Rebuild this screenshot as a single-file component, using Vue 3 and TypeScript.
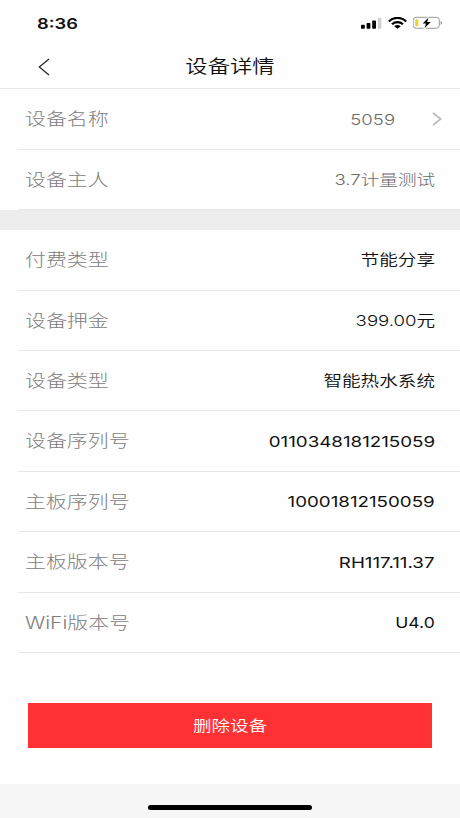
<script setup lang="ts">
interface Row {
  label: string
  value: string
  arrow?: boolean
  kind?: 'latin' | 'serial' | 'short'
}

const ownerRows: Row[] = [
  { label: '设备名称', value: '5059', arrow: true, kind: 'latin' },
  { label: '设备主人', value: '3.7计量测试' },
]

const detailRows: Row[] = [
  { label: '付费类型', value: '节能分享' },
  { label: '设备押金', value: '399.00元' },
  { label: '设备类型', value: '智能热水系统' },
  { label: '设备序列号', value: '0110348181215059', kind: 'serial' },
  { label: '主板序列号', value: '10001812150059', kind: 'serial' },
  { label: '主板版本号', value: 'RH117.11.37', kind: 'serial' },
  { label: 'WiFi版本号', value: 'U4.0', kind: 'short' },
]
</script>

<template>
  <div class="screen">
    <div class="status">
      <span class="time">8:36</span>
      <div class="indicators">
        <svg class="signal" width="21" height="12" viewBox="0 0 21 12">
          <rect x="0" y="7.8" width="3.8" height="4" rx="0.8" />
          <rect x="5.6" y="5.9" width="3.8" height="5.9" rx="0.8" />
          <rect x="11.2" y="3.5" width="3.8" height="8.3" rx="0.8" />
          <rect x="16.8" y="1.1" width="3.6" height="10.7" rx="0.8" fill="#cfcfcf" />
        </svg>
        <svg class="wifi" width="19" height="12" viewBox="0 0 19 12">
          <g fill="none" stroke="#000" stroke-width="2.2">
            <path d="M0.8 4.5C5.7-.3 13.3-.3 18.2 4.5" />
            <path d="M4 7.3C7.2 4.4 11.8 4.4 15 7.3" />
          </g>
          <path d="M6.2 9.2C8.1 7.6 10.9 7.6 12.8 9.2L9.5 11.8Z" />
        </svg>
        <svg class="battery" width="30" height="14" viewBox="0 0 30 14">
          <rect x="0.2" y="1.3" width="26.1" height="11" rx="3" fill="none" stroke="#999" stroke-width="1" />
          <path d="M27.6 4.9C29.5 5.3 29.5 8.3 27.6 8.7Z" fill="#999" />
          <rect x="2.2" y="3.3" width="3" height="7" rx="1" fill="#f4d21f" />
          <path d="M15.4 1.7L9.7 7.6H13L11.7 12L17.8 6.1H14.2Z" stroke="#fff" stroke-width="2" paint-order="stroke" />
        </svg>
      </div>
    </div>
    <header class="nav">
      <svg class="back" width="12" height="18" viewBox="0 0 12 18">
        <path d="M11 1L1.3 9L11 17" fill="none" stroke="#222" stroke-width="1.2" />
      </svg>
      <h1 class="title">设备详情</h1>
    </header>
    <section class="group">
      <div v-for="row in ownerRows" :key="row.label" class="row muted">
        <span class="label">{{ row.label }}</span>
        <span class="value" :class="row.kind">{{ row.value }}</span>
        <svg v-if="row.arrow" class="arrow" width="10" height="14" viewBox="0 0 10 14">
          <path d="M1 1L8.7 7L1 13" fill="none" stroke="#bbb" stroke-width="1.6" />
        </svg>
      </div>
    </section>
    <div class="divider"></div>
    <section class="group">
      <div v-for="row in detailRows" :key="row.label" class="row">
        <span class="label">{{ row.label }}</span>
        <span class="value" :class="row.kind">{{ row.value }}</span>
      </div>
    </section>
    <button class="remove" type="button"><span>删除设备</span></button>
    <footer class="home"><div class="bar"></div></footer>
  </div>
</template>

<style>
body {
  margin: 0;
  background: #fff;
}
</style>

<style scoped>
.screen {
  display: flex;
  flex-direction: column;
  width: 460px;
  height: 818px;
  overflow: hidden;
  background: #fefefe;
  font-family: Inter, "Noto Sans CJK SC", sans-serif;
  color: #111;
}
.status {
  display: flex;
  align-items: center;
  justify-content: space-between;
  box-sizing: border-box;
  height: 46px;
  padding: 0 17px 0 37px;
}
.time {
  font-size: 15px;
  font-weight: 600;
  transform: scaleX(1.22);
  transform-origin: left;
}
.indicators {
  display: flex;
  align-items: center;
}
.wifi {
  margin-left: 6px;
}
.battery {
  margin-left: 6px;
}
.nav {
  display: grid;
  grid-template-columns: 38px 1fr 38px;
  align-items: center;
  box-sizing: border-box;
  height: 43px;
  border-bottom: 1px solid #e8e8e8;
}
.back {
  justify-self: end;
  overflow: visible;
  transform: translateX(12px);
}
.title {
  margin: 0;
  font-size: 18px;
  font-weight: 350;
  line-height: 24px;
  text-align: center;
  transform: scaleX(1.24);
}
.group {
  flex: none;
  padding: 0.3px 0 0 18px;
}
.row {
  display: flex;
  align-items: center;
  box-sizing: border-box;
  height: 60.42px;
  padding: 0 25px 0 7px;
  border-bottom: 1px solid #e7e7e7;
}
.label {
  padding-bottom: 2.6px;
  font-size: 17px;
  font-weight: 300;
  color: #808080;
  white-space: nowrap;
  transform: scaleX(1.23);
  transform-origin: left;
}
.value {
  margin-left: auto;
  padding-bottom: 2px;
  font-size: 15px;
  font-weight: 350;
  white-space: nowrap;
  transform: scaleX(1.24);
  transform-origin: right;
}
.latin,
.serial,
.short {
  padding: 0.4px 0 0;
  font-weight: 400;
}
.serial {
  transform: scaleX(1.25);
}
.short {
  transform: scaleX(1.17);
}
.muted .value {
  font-weight: 300;
  color: #6c6c6c;
}
.arrow {
  margin: 0 -7px 0 37px;
}
.divider {
  flex: none;
  height: 19.86px;
  background: #ededed;
}
.remove {
  flex: none;
  height: 45px;
  margin: 49.6px 28px 0;
  padding: 0 0 1px;
  border: 0;
  background: #ff3134;
  color: #fff;
  font: 350 15px Inter, "Noto Sans CJK SC", sans-serif;
}
.remove span {
  display: inline-block;
  transform: scaleX(1.235);
}
.home {
  display: flex;
  justify-content: center;
  box-sizing: border-box;
  height: 34px;
  margin-top: auto;
  padding-top: 20.5px;
  background: #f6f6f6;
}
.bar {
  width: 164px;
  height: 5px;
  border-radius: 3px;
  background: #000;
}
</style>
